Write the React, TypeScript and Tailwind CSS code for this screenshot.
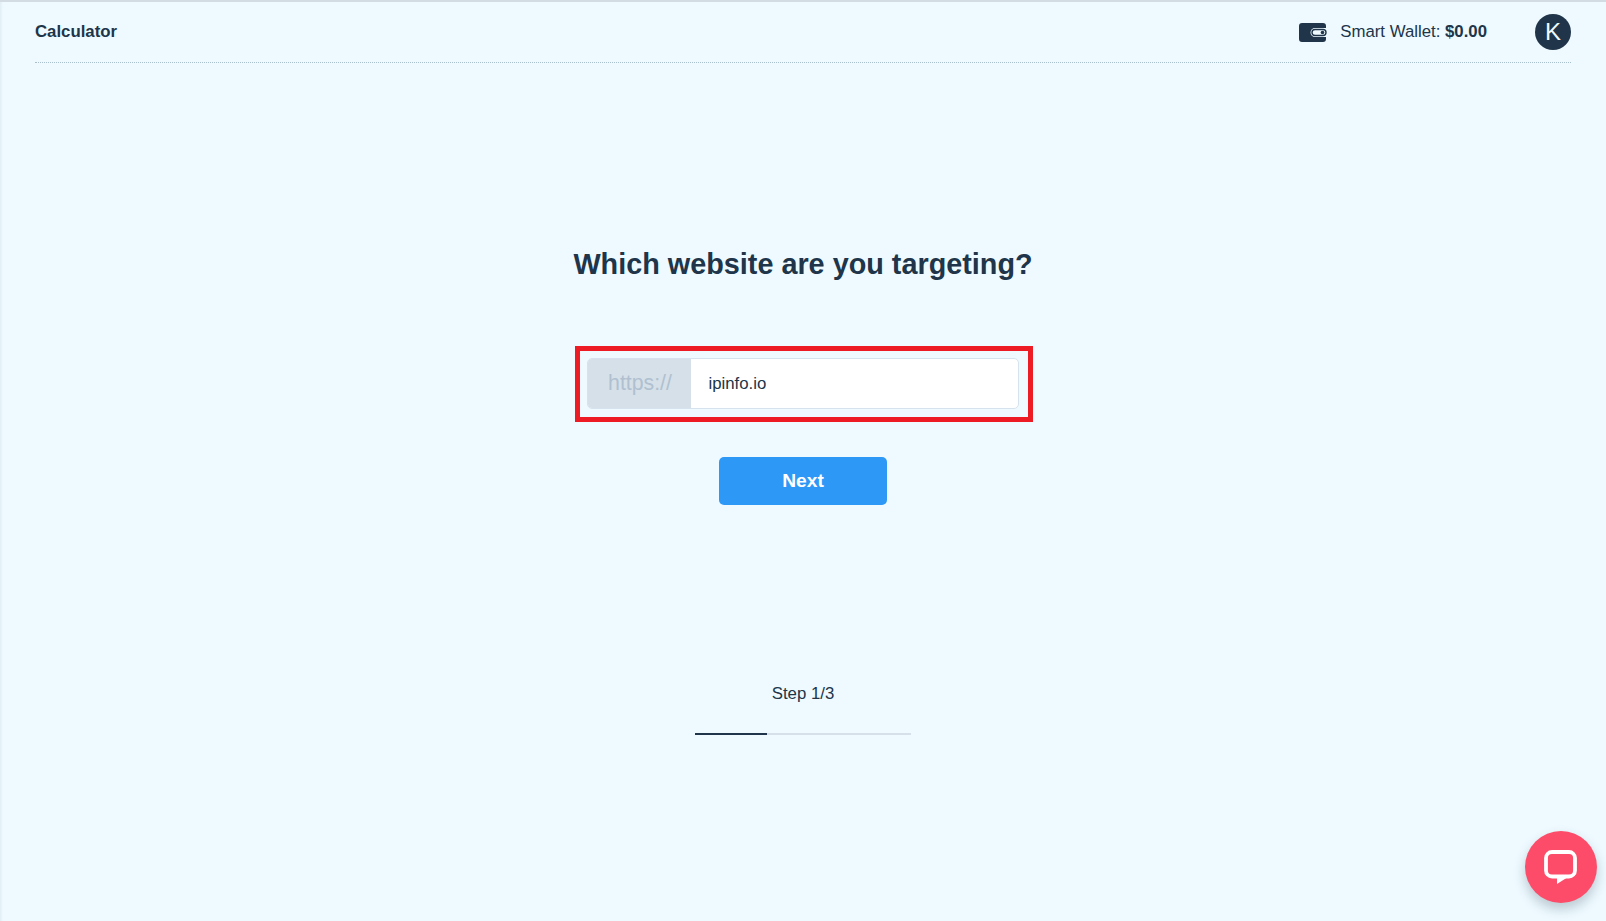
export default function App() {
	return (
		<div className="relative h-[921px] overflow-hidden border-t-2 border-[#d3dce3] bg-[#eefaff] font-['Liberation_Sans',Arial,sans-serif] text-[#203549] shadow-[inset_3px_0_3px_-2px_rgba(32,53,73,0.08)]">
			<header className="mx-[35px] flex h-[61px] items-center justify-between border-b border-dotted border-[#a9bfce]">
				<div className="text-[16.800px] font-bold">Calculator</div>
				<div className="flex items-center">
					<svg width="28" height="19" viewBox="0 0 28 19" className="mr-[13px]">
						<path d="M3 0H24a3 3 0 0 1 3 3V5H16a4.500 4.500 0 0 0 0 9H27v2a3 3 0 0 1-3 3H3a3 3 0 0 1-3-3V3a3 3 0 0 1 3-3Z" fill="#203549" />
						<rect x="13" y="6.500" width="14" height="6" rx="3" fill="none" stroke="#203549" strokeWidth="1.400" />
						<circle cx="23.500" cy="9.500" r="1.800" fill="#203549" />
					</svg>
					<span className="text-[16.800px]">
						Smart Wallet: <b>$0.00</b>
					</span>
					<div className="ml-12 flex size-9 items-center justify-center rounded-full bg-[#203549] text-2xl text-[#eefaff]">K</div>
				</div>
			</header>
			<main className="flex flex-col items-center">
				<h1 className="mt-[183px] text-[28.800px] leading-[36px] font-bold">Which website are you targeting?</h1>
				<div className="mt-[64px] ml-px w-[458px] border-[5px] border-[#ed1c24] pt-[7px] pr-[9px] pb-2 pl-[7px]">
					<div className="flex h-[51px] overflow-hidden rounded-[5px] border border-[#d6e2ee] bg-white">
						<div className="flex w-[103px] items-center justify-center bg-[#d6e0e9] pl-0.5 text-[21.300px] text-[#b0c0d0]">https://</div>
						<div className="flex flex-1 items-center pl-[18px] text-[16.800px]">ipinfo.io</div>
					</div>
				</div>
				<button className="mt-[35px] h-12 w-[168px] rounded-[5px] bg-[#2e98f7] text-[19.200px] font-bold text-white">Next</button>
				<div className="mt-[179px] text-[16.800px] leading-[20px]">Step 1/3</div>
				<div className="mt-[29px] flex h-0.5 w-[216px] bg-[#d6e0e9]">
					<div className="w-[72px] bg-[#203549]" />
				</div>
			</main>
			<button className="absolute top-[829px] left-[1525px] flex size-[72px] items-center justify-center rounded-full bg-[#fc4c69] shadow-[0_6px_12px_rgba(32,53,73,0.25)]">
				<svg width="34" height="34" viewBox="0 0 34 34">
					<rect x="2" y="2" width="29" height="24.500" rx="6" fill="none" stroke="#fff" strokeWidth="3.800" />
					<path d="M13 25V34L24 27V25Z" fill="#fff" />
				</svg>
			</button>
		</div>
	)
}
